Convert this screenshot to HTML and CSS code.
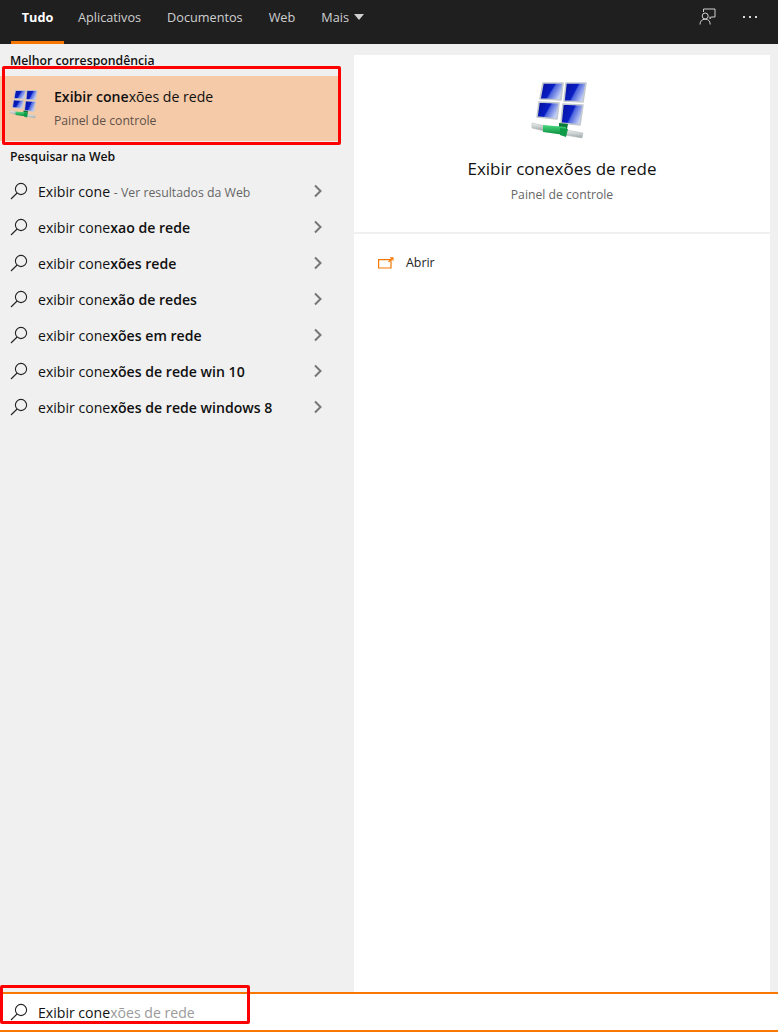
FILE: index.html
```html
<!DOCTYPE html>
<html lang="pt">
<head>
<meta charset="utf-8">
<title>Pesquisa</title>
<link rel="stylesheet" href="styles.css">
</head>
<body>
<svg class="defs" width="0" height="0" aria-hidden="true">
  <defs>
    <symbol id="search" viewBox="0 0 18 18">
      <circle cx="11" cy="7" r="5.6" fill="none" stroke="currentColor" stroke-width="1.1"/>
      <path d="M7.1 11 L1 17" fill="none" stroke="currentColor" stroke-width="1.1"/>
    </symbol>
    <symbol id="chev" viewBox="0 0 10 14">
      <path d="M2 1.5 L7.5 7 L2 12.5" fill="none" stroke="currentColor" stroke-width="2"/>
    </symbol>
    <linearGradient id="scr" x1="0" y1="0" x2="1" y2=".45">
      <stop offset="0" stop-color="#06109a"/>
      <stop offset=".56" stop-color="#0a1ec4"/>
      <stop offset=".62" stop-color="#4a62dc"/>
      <stop offset="1" stop-color="#c5d0f5"/>
    </linearGradient>
    <linearGradient id="grn" x1="0" y1="0" x2="0" y2="1">
      <stop offset="0" stop-color="#49d97f"/>
      <stop offset="1" stop-color="#078a3c"/>
    </linearGradient>
    <linearGradient id="tube" x1="0" y1="0" x2="0" y2="1">
      <stop offset="0" stop-color="#f0f4f4"/>
      <stop offset="1" stop-color="#9aa5a5"/>
    </linearGradient>
    <symbol id="net" viewBox="0 0 64 64">
      <g stroke="#c4c9ce" stroke-width="1.6" stroke-linejoin="round">
        <path d="M13 5 L33 5 L31 22 L10 21 Z" fill="url(#scr)"/>
        <path d="M36 5 L56 5 L53 24 L34 23 Z" fill="url(#scr)"/>
        <path d="M9 24 L29 25 L27 41 L7 39 Z" fill="url(#scr)"/>
        <path d="M33 26 L53 27 L50 47 L31 45 Z" fill="url(#scr)"/>
      </g>
      <path d="M2 45 L15 48 L14 53 L2 50 Z" fill="url(#tube)" stroke="#b5bcbc" stroke-width=".6"/>
      <path d="M36 52 L53 55 L52 60 L35 57 Z" fill="url(#tube)" stroke="#b5bcbc" stroke-width=".6"/>
      <path d="M29 45 L38 46 L37 51 L29 50 Z" fill="#0b7a38"/>
      <path d="M13 47 L36 49 L35 57 L13 54 Z" fill="url(#grn)"/>
      <path d="M30 50 L38 51 L36 59 L30 57 Z" fill="#0d9b48"/>
    </symbol>
  </defs>
</svg>

<div class="app">
  <header class="topbar">
    <nav class="tabs">
      <a class="tab tab-active">Tudo</a>
      <a class="tab">Aplicativos</a>
      <a class="tab">Documentos</a>
      <a class="tab">Web</a>
      <a class="tab tab-more">Mais <span class="caret"></span></a>
    </nav>
    <div class="top-actions">
      <svg class="feedback" viewBox="0 0 18 18" width="18" height="18">
        <path d="M4.5 4 V1 H16 V9 H12.2 L11 10.8 V8.6" fill="none" stroke="#d0d0d0" stroke-width="1"/>
        <circle cx="6.2" cy="8" r="3" fill="none" stroke="#d0d0d0" stroke-width="1"/>
        <path d="M1 16.5 C1 13 3 11.2 6.2 11.2 C9.4 11.2 11.2 13 11.2 16.5" fill="none" stroke="#d0d0d0" stroke-width="1"/>
      </svg>
      <span class="dots"><i></i><i></i><i></i></span>
    </div>
  </header>

  <main class="body">
    <section class="left">
      <h2 class="heading heading-first">Melhor correspondência</h2>
      <div class="best">
        <svg class="best-icon"><use href="#net"/></svg>
        <div class="best-text">
          <div class="best-title"><b>Exibir cone</b>xões de rede</div>
          <div class="best-sub">Painel de controle</div>
        </div>
      </div>
      <h2 class="heading heading-web">Pesquisar na Web</h2>
      <ul class="results">
        <li class="row"><svg class="mag"><use href="#search"/></svg><span class="row-text">Exibir cone <span class="hint">- Ver resultados da Web</span></span><svg class="chev"><use href="#chev"/></svg></li>
        <li class="row"><svg class="mag"><use href="#search"/></svg><span class="row-text">exibir cone<b>xao de rede</b></span><svg class="chev"><use href="#chev"/></svg></li>
        <li class="row"><svg class="mag"><use href="#search"/></svg><span class="row-text">exibir cone<b>xões rede</b></span><svg class="chev"><use href="#chev"/></svg></li>
        <li class="row"><svg class="mag"><use href="#search"/></svg><span class="row-text">exibir cone<b>xão de redes</b></span><svg class="chev"><use href="#chev"/></svg></li>
        <li class="row"><svg class="mag"><use href="#search"/></svg><span class="row-text">exibir cone<b>xões em rede</b></span><svg class="chev"><use href="#chev"/></svg></li>
        <li class="row"><svg class="mag"><use href="#search"/></svg><span class="row-text">exibir cone<b>xões de rede win 10</b></span><svg class="chev"><use href="#chev"/></svg></li>
        <li class="row"><svg class="mag"><use href="#search"/></svg><span class="row-text">exibir cone<b>xões de rede windows 8</b></span><svg class="chev"><use href="#chev"/></svg></li>
      </ul>
    </section>

    <section class="right">
      <div class="card">
        <div class="hero">
          <svg class="hero-icon"><use href="#net"/></svg>
          <div class="hero-title">Exibir conexões de rede</div>
          <div class="hero-sub">Painel de controle</div>
        </div>
        <div class="action">
          <svg class="open-icon" viewBox="0 0 16 12" width="16" height="12">
            <path d="M.6 2.6 H13 V11 H.6 Z" fill="none" stroke="#f77700" stroke-width="1.2"/>
            <path d="M10.5 5 L14.5 1 M12 .7 H15 V3.7" fill="none" stroke="#f77700" stroke-width="1.1"/>
          </svg>
          <span>Abrir</span>
        </div>
      </div>
    </section>
  </main>

  <footer class="searchbar">
    <svg class="mag"><use href="#search"/></svg>
    <span class="query">Exibir cone<span class="ghost">xões de rede</span></span>
  </footer>

  <div class="mark mark-best"></div>
  <div class="mark mark-search"></div>
</div>
</body>
</html>
```

FILE: styles.css
```css
* { box-sizing: border-box; }
html, body { margin: 0; padding: 0; }
body {
  font-family: "Open Sans", "Noto Sans", "Liberation Sans", sans-serif;
  font-size: 14.1px;
  color: #111;
  background: #f0f0f0;
}
.defs { position: absolute; }
.app {
  position: relative;
  width: 778px;
  height: 1032px;
  display: flex;
  flex-direction: column;
  overflow: hidden;
}

/* top bar */
.topbar {
  flex: 0 0 44px;
  background: #1f1f1f;
  display: flex;
  justify-content: space-between;
  padding: 0 21px 0 11px;
}
.tabs { display: flex; gap: 0; }
.tab {
  display: flex;
  align-items: center;
  gap: 5px;
  height: 44px;
  padding: 0 0 10px;
  font-size: 12.7px;
  color: #cfcfcf;
  margin-right: 26px;
}
.tab-active {
  width: 53px;
  justify-content: center;
  margin-right: 14px;
  color: #fff;
  font-weight: 700;
  border-bottom: 3px solid #f77700;
  padding-bottom: 7px;
}
.tab-more { margin-right: 0; }
.caret {
  width: 0;
  height: 0;
  border-left: 5.5px solid transparent;
  border-right: 5.5px solid transparent;
  border-top: 6px solid #cfcfcf;
}
.top-actions { display: flex; align-items: flex-start; gap: 26px; padding-top: 8px; }
.dots { display: flex; gap: 4px; padding-top: 8px; }
.dots i { width: 2px; height: 2px; background: #d8d8d8; display: block; }

/* body */
.body { flex: 1; display: flex; min-height: 0; }
.left { width: 342px; background: #f0f0f0; }
.heading {
  margin: 0;
  font-size: 12.25px;
  font-weight: 600;
  color: #111;
  padding-left: 10px;
  line-height: 18px;
}
.heading-first { padding-top: 8px; height: 32px; }
.heading-web { padding-top: 7px; height: 32px; }

.best {
  height: 65px;
  background: #f5caa8;
  display: flex;
  align-items: flex-start;
  margin-right: 2px;
}
.best-icon { width: 32px; height: 32px; margin: 12px 0 0 9px; flex: none; }
.best-text { margin-left: 13px; padding-top: 11px; }
.best-title { font-size: 14.1px; line-height: 20px; color: #111; }
.best-title b { font-weight: 600; }
.best-sub { font-size: 12.2px; line-height: 18px; margin-top: 5px; color: #5f5148; }

.results { list-style: none; margin: 0; padding: 0; }
.row {
  height: 36px;
  display: flex;
  align-items: center;
  padding-left: 10px;
  padding-right: 19px;
  font-size: 14.1px;
  color: #111;
}
.row b { font-weight: 600; }
.row-text { flex: 1; white-space: nowrap; margin-left: 10px; }
.hint { font-size: 12.3px; color: #666; }
.mag { width: 18px; height: 18px; color: #222; flex: none; }
.chev { width: 10px; height: 14px; color: #767676; flex: none; }

.right { flex: 1; padding: 11px 8px 0 12px; }
.card {
  height: 100%;
  background: #fff;
}
.hero {
  height: 179px;
  border-bottom: 2px solid #f0f0f0;
  display: flex;
  flex-direction: column;
  align-items: center;
  padding-top: 23px;
}
.hero-icon { width: 64px; height: 64px; }
.hero-title { font-size: 17px; line-height: 24px; margin-top: 15px; color: #111; }
.hero-sub { font-size: 12.2px; line-height: 18px; margin-top: 5px; color: #666; }
.action {
  display: flex;
  align-items: center;
  gap: 12px;
  padding: 13px 0 0 24px;
  font-size: 12.4px;
  color: #222;
  height: 44px;
}

/* search bar */
.searchbar {
  flex: 0 0 40px;
  background: #fff;
  border-top: 2px solid #f77700;
  border-bottom: 2px solid #f77700;
  display: flex;
  align-items: center;
  padding: 0 0 0 10px;
  gap: 10px;
}
.query { font-size: 14.1px; color: #111; }
.ghost { color: #9a9a9a; }

/* red annotations, drawn over the capture */
.mark {
  position: absolute;
  border: 3px solid #f00;
  border-radius: 2px;
  pointer-events: none;
}
.mark-best { left: 2px; top: 66px; width: 339px; height: 79px; }
.mark-search { left: 0; top: 985px; width: 250px; height: 39px; }
```
